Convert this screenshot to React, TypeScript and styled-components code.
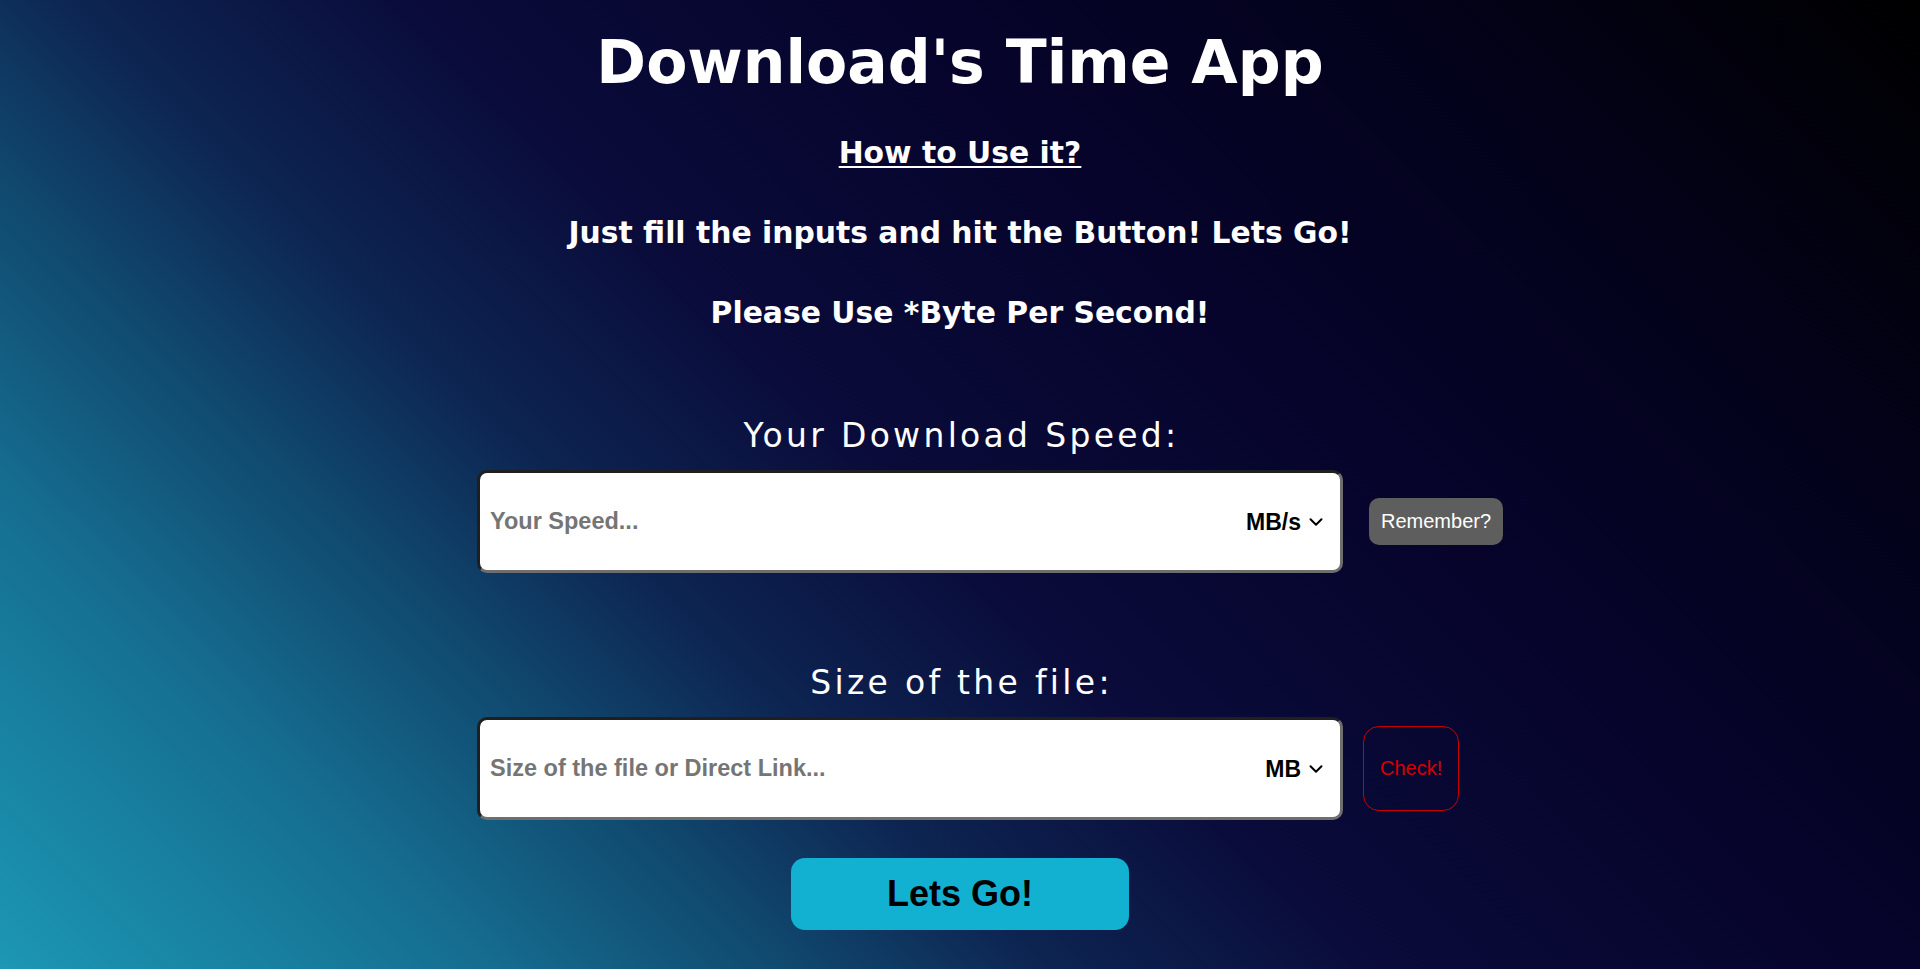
import React from "react";
import styled, { createGlobalStyle } from "styled-components";
import { ChevronDown } from "lucide-react";

const GlobalStyle = createGlobalStyle`
  * {
    box-sizing: border-box;
  }

  body {
    margin: 0;
    min-height: 100vh;
    font-family: "DejaVu Sans", Verdana, sans-serif;
    background: linear-gradient(
      45deg,
      #1c97b4 0%,
      #156d90 17%,
      #10466c 28%,
      #0d2552 36%,
      #0a0b3a 48%,
      #06042b 65%,
      #03021a 82%,
      #000000 100%
    );
    background-attachment: fixed;
  }
`;

const Page = styled.main`
  min-height: 100vh;
  display: flex;
  flex-direction: column;
  align-items: center;
  padding-top: 27px;
  color: #ffffff;
`;

const Title = styled.h1`
  margin: 0 0 38px;
  font-size: 60px;
  font-weight: bold;
  line-height: normal;
`;

const Note = styled.h2<{ $underline?: boolean; $last?: boolean }>`
  margin: 0 0 ${({ $last }) => ($last ? 0 : 45)}px;
  font-size: 29.8px;
  font-weight: bold;
  line-height: normal;
  text-decoration: ${({ $underline }) => ($underline ? "underline" : "none")};
  text-decoration-thickness: 2px;
  text-underline-offset: 3px;
`;

const Field = styled.section<{ $top: number }>`
  display: flex;
  flex-direction: column;
  align-items: center;
  gap: 15px;
  margin-top: ${({ $top }) => $top}px;
`;

const Label = styled.label`
  font-size: 33px;
  font-weight: normal;
  letter-spacing: 3.3px;
  line-height: normal;
  padding-left: 3px;
`;

const Row = styled.div<{ $gap: number }>`
  display: flex;
  align-items: center;
  gap: ${({ $gap }) => $gap}px;
  width: 966px;

  & > * {
    flex-shrink: 0;
  }
`;

const InputBox = styled.div`
  display: flex;
  align-items: center;
  width: 866px;
  height: 103px;
  padding: 0 13px 0 10px;
  background: #ffffff;
  border: 3px solid;
  border-color: #1f1f1f #6e6e6e #6e6e6e #1f1f1f;
  border-radius: 10px;
`;

const TextInput = styled.input`
  flex: 1;
  min-width: 0;
  border: none;
  outline: none;
  background: transparent;
  padding: 0;
  font-family: "Liberation Sans", Arial, sans-serif;
  font-size: 23.5px;
  font-weight: bold;
  color: #222;

  &::placeholder {
    color: #757575;
  }
`;

const Unit = styled.div`
  display: flex;
  align-items: center;
  gap: 4px;
  color: #000;
`;

const UnitSelect = styled.select`
  appearance: none;
  border: none;
  outline: none;
  background: transparent;
  padding: 0;
  font-family: "Liberation Sans", Arial, sans-serif;
  font-size: 23px;
  font-weight: bold;
  color: #000;
  text-align: right;
  cursor: pointer;
`;

const SideButton = styled.button<{ $variant: "grey" | "outline" }>`
  font-family: "Liberation Sans", Arial, sans-serif;
  font-size: 20px;
  line-height: 23px;
  cursor: pointer;
  border-radius: ${({ $variant }) => ($variant === "grey" ? "10px" : "16px")};
  padding: ${({ $variant }) => ($variant === "grey" ? "12px 12px" : "30px 16px")};
  background: ${({ $variant }) => ($variant === "grey" ? "#5e5e5e" : "transparent")};
  color: ${({ $variant }) => ($variant === "grey" ? "#ffffff" : "#d60000")};
  border: ${({ $variant }) => ($variant === "grey" ? "none" : "1px solid #c80000")};
`;

const GoButton = styled.button`
  margin-top: 38px;
  width: 338px;
  height: 72px;
  border: none;
  border-radius: 14px;
  background: #13b1d1;
  color: #000;
  font-family: "Liberation Sans", Arial, sans-serif;
  font-size: 36px;
  font-weight: bold;
  cursor: pointer;
`;

interface UnitFieldProps {
  top: number;
  label: string;
  placeholder: string;
  units: string[];
  gap: number;
  action: React.ReactNode;
}

const UnitField: React.FC<UnitFieldProps> = ({ top, label, placeholder, units, gap, action }) => (
  <Field $top={top}>
    <Label>{label}</Label>
    <Row $gap={gap}>
      <InputBox>
        <TextInput type="text" placeholder={placeholder} />
        <Unit>
          <UnitSelect defaultValue={units[0]}>
            {units.map((u) => (
              <option key={u} value={u}>
                {u}
              </option>
            ))}
          </UnitSelect>
          <ChevronDown size={22} strokeWidth={2.2} />
        </Unit>
      </InputBox>
      {action}
    </Row>
  </Field>
);

export default function App() {
  return (
    <>
      <GlobalStyle />
      <Page>
        <Title>Download's Time App</Title>
        <Note $underline>How to Use it?</Note>
        <Note>Just fill the inputs and hit the Button! Lets Go!</Note>
        <Note $last>Please Use *Byte Per Second!</Note>

        <UnitField
          top={86}
          label="Your Download Speed:"
          placeholder="Your Speed..."
          units={["MB/s", "KB/s", "GB/s"]}
          gap={26}
          action={<SideButton $variant="grey">Remember?</SideButton>}
        />
        <UnitField
          top={90}
          label="Size of the file:"
          placeholder="Size of the file or Direct Link..."
          units={["MB", "KB", "GB"]}
          gap={20}
          action={<SideButton $variant="outline">Check!</SideButton>}
        />

        <GoButton>Lets Go!</GoButton>
      </Page>
    </>
  );
}
